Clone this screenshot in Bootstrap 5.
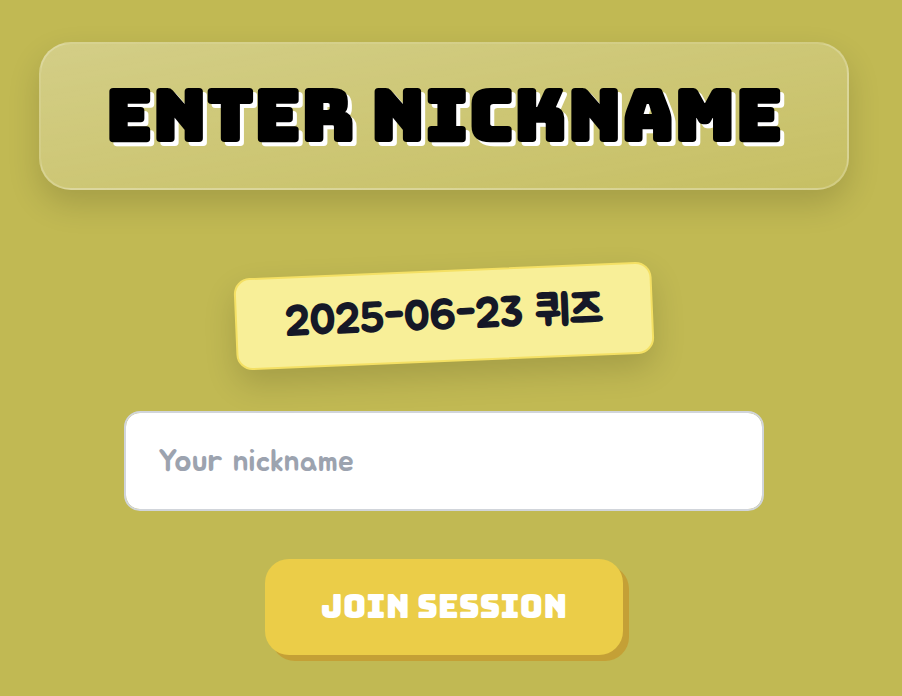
<!DOCTYPE html>
<html lang="en">
<head>
<meta charset="utf-8">
<meta name="viewport" content="width=device-width, initial-scale=1">
<title>Enter nickname</title>
<link href="https://cdn.jsdelivr.net/npm/bootstrap@5.3.0/dist/css/bootstrap.min.css" rel="stylesheet">
<style>
body { background: #c1b953; font-family: Jua, Lato, "Noto Sans CJK KR", sans-serif; }
.join-page { padding: 42px 53px 36px 39px; }
.display-face { font-family: Bungee, Inter, sans-serif; font-weight: 400; text-transform: uppercase; }
.title-panel {
  padding: 37px 24px; border: 2px solid rgba(255,255,255,.2); border-radius: 32px;
  background: linear-gradient(to bottom right, rgba(255,255,255,.3), rgba(255,255,255,.1));
  box-shadow: 0 14px 32px rgba(0,0,0,.15);
}
.title-panel h1 { font-size: 72px; line-height: 70px; font-weight: 900; color: #000; text-shadow: 4px 4px 0 #fff; }
.quiz-tag {
  margin-top: 80px; padding: 14px 48px; border: 2px solid #f4e064; border-radius: 16px;
  background: #f8ef98; color: #151827; font-size: 42px; line-height: 60px; font-weight: 700;
  transform: rotate(-2.4deg); box-shadow: 0 14px 32px rgba(0,0,0,.15);
}
.join-form { max-width: 640px; margin-top: 49px; }
.nick-input { height: 100px; padding: 0 32px; border: 2px solid #d1d5db; border-radius: 16px; font-size: 32px; }
.nick-input::placeholder { color: #9ca3af; }
.join-btn, .join-btn:hover {
  margin-top: 48px; padding: 24px 56px; border: 0; border-radius: 24px; background: #ebcd48; color: #fff;
  font-size: 32px; line-height: 48px; box-shadow: 6px 6px 0 #c4a036;
}
</style>
</head>
<body>
<main class="join-page d-flex flex-column align-items-center">
  <header class="title-panel w-100 text-center">
    <h1 class="display-face text-nowrap m-0">Enter Nickname</h1>
  </header>
  <div class="quiz-tag text-nowrap">2025-06-23 <span lang="ko">퀴즈</span></div>
  <form class="join-form w-100 d-flex flex-column align-items-center">
    <label class="visually-hidden" for="nickname">Your nickname</label>
    <input class="form-control nick-input" id="nickname" type="text" placeholder="Your nickname">
    <button class="btn join-btn display-face text-nowrap" type="submit">Join Session</button>
  </form>
</main>
<script src="https://cdn.jsdelivr.net/npm/bootstrap@5.3.0/dist/js/bootstrap.bundle.min.js"></script>
</body>
</html>
